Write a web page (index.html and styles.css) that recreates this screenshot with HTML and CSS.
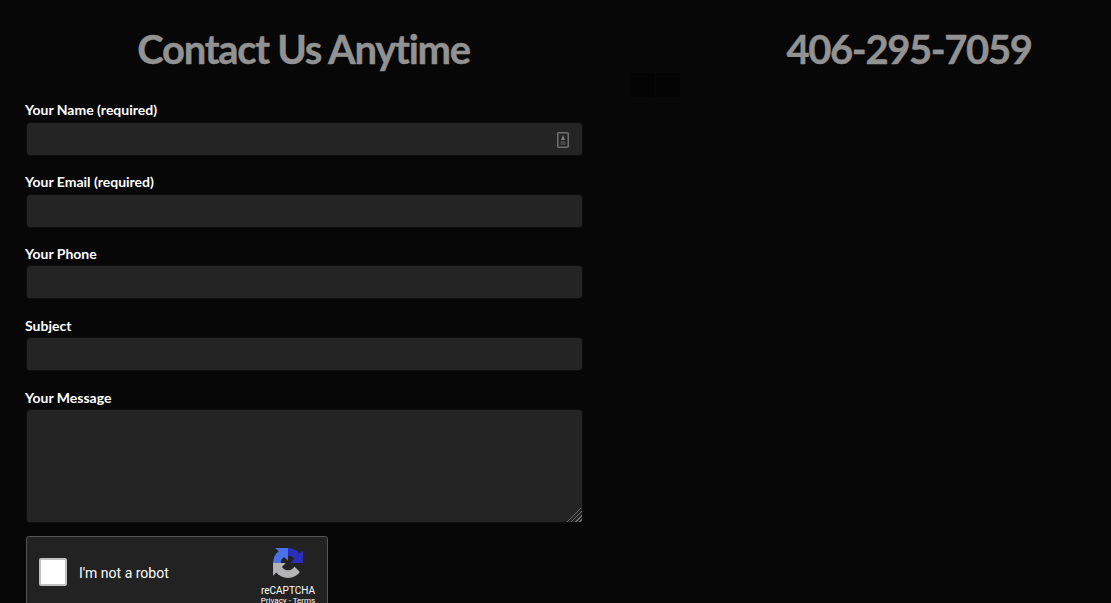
FILE: index.html
```html
<!DOCTYPE html>
<html lang="en">
<head>
    <meta charset="UTF-8">
    <meta name="viewport" content="width=device-width, initial-scale=1.0">
    <title>Contact Us Anytime</title>
    <link rel="stylesheet" href="styles.css">
</head>
<body>
    <div class="page">
        <section class="contact-col">
            <h2 class="big-title">Contact Us Anytime</h2>
            <form class="contact-form">
                <div class="field">
                    <label for="yourName">Your Name (required)</label>
                    <div class="input-wrap">
                        <input type="text" id="yourName">
                        <svg class="autofill-icon" viewBox="0 0 12 16" width="12" height="16" aria-hidden="true">
                            <rect x="0.75" y="0.75" width="10.5" height="14.5" rx="1" fill="none" stroke="#707070" stroke-width="1.5"/>
                            <path d="M6 3 L8 8 H4 Z" fill="#808080"/>
                            <rect x="3.5" y="9.5" width="5" height="1" fill="#666"/>
                            <rect x="3.5" y="11.5" width="5" height="1" fill="#666"/>
                        </svg>
                    </div>
                </div>
                <div class="field">
                    <label for="yourEmail">Your Email (required)</label>
                    <input type="email" id="yourEmail">
                </div>
                <div class="field">
                    <label for="yourPhone">Your Phone</label>
                    <input type="tel" id="yourPhone">
                </div>
                <div class="field">
                    <label for="subject">Subject</label>
                    <input type="text" id="subject">
                </div>
                <div class="field">
                    <label for="yourMessage">Your Message</label>
                    <textarea id="yourMessage"></textarea>
                </div>
                <div class="captcha">
                    <span class="captcha-box"></span>
                    <span class="captcha-text">I'm not a robot</span>
                    <div class="captcha-brand">
                        <svg viewBox="0 0 64 64" width="30" height="30" aria-hidden="true">
                            <path d="M64 31.955l-.033-1.37V4.687l-7.16 7.16C50.948 4.674 42.033.093 32.05.093 21.665.093 12.43 5.05 6.593 12.727l11.736 11.86a15.55 15.55 0 0 1 4.75-5.32c2.05-1.6 4.952-2.91 8.968-2.91.485 0 .86.057 1.133.163 4.978.393 9.293 3.14 11.834 7.127l-8.308 8.31c10.523-.04 22.4-.066 28.294.003" fill="#2b2fb8"/>
                            <path d="M31.95 0l-1.37.033H4.687l7.16 7.16C4.674 13.05.093 21.967.093 31.95c0 10.385 4.958 19.62 12.635 25.458l11.86-11.736a15.55 15.55 0 0 1-5.32-4.75c-1.6-2.05-2.91-4.952-2.91-8.968 0-.485.057-.86.163-1.133.393-4.978 3.14-9.293 7.127-11.834l8.31 8.308c-.04-10.523-.066-22.4.003-28.294" fill="#4a72e6"/>
                            <path d="M0 32l.033 1.37v25.9l7.16-7.16c5.86 7.173 14.774 11.754 24.757 11.754 10.385 0 19.62-4.958 25.458-12.635l-11.736-11.86a15.55 15.55 0 0 1-4.75 5.32c-2.05 1.6-4.952 2.91-8.968 2.91-.485 0-.86-.057-1.133-.163-4.978-.393-9.293-3.14-11.834-7.127l8.308-8.31c-10.523.04-22.4.066-28.294-.003" fill="#b4b4b4"/>
                        </svg>
                        <span class="captcha-name">reCAPTCHA</span>
                        <span class="captcha-links">Privacy - Terms</span>
                    </div>
                </div>
            </form>
        </section>
        <section class="phone-col">
            <h2 class="big-title phone-title">406-295-7059</h2>
            <div class="ghost-squares">
                <span></span>
                <span></span>
            </div>
        </section>
    </div>
</body>
</html>
```

FILE: styles.css
```css
html, body {
    height: 100%;
}

body {
    margin: 0;
    background: #070707;
    font-family: 'Lato', sans-serif;
    overflow: hidden;
    color: #fff;
}

.page {
    display: grid;
    grid-template-columns: 610px 1fr;
}

.contact-col {
    padding: 0 28px 0 25px;
}

.big-title {
    margin: 0;
    padding-top: 25px;
    font-size: 40px;
    line-height: 48px;
    font-weight: 700;
    letter-spacing: -1.3px;
    color: #929292;
    text-align: center;
    -webkit-text-stroke: 0.4px #929292;
}

.contact-form {
    margin-top: 27.4px;
}

.field + .field {
    margin-top: 16.4px;
}

.field label {
    display: block;
    font-size: 14px;
    line-height: 20px;
    font-weight: 700;
    margin-bottom: 1.4px;
}

.field input,
.field textarea {
    display: block;
    box-sizing: border-box;
    width: 557px;
    height: 34px;
    margin-left: 1px;
    background: #242424;
    border: 1px solid #0e0e0e;
    border-radius: 4px;
    color: #fff;
    outline: none;
}

.field textarea {
    height: 114px;
    resize: vertical;
}

.field textarea::-webkit-resizer {
    background:
        linear-gradient(135deg, #242424 50%, transparent 50%),
        repeating-linear-gradient(135deg, #242424 0 1px, #6a6a6a 1px 2px, #242424 2px 3px);
}

.input-wrap {
    position: relative;
}

.autofill-icon {
    position: absolute;
    top: 10px;
    right: 13px;
}

.captcha {
    display: flex;
    align-items: flex-start;
    box-sizing: border-box;
    width: 302px;
    height: 76px;
    margin: 13px 0 0 1px;
    background: #222;
    border: 1px solid #555;
    border-radius: 3px;
}

.captcha-box {
    box-sizing: border-box;
    width: 28px;
    height: 28px;
    margin: 21px 0 0 12px;
    background: #fff;
    border: 2px solid #c1c1c1;
    border-radius: 2px;
}

.captcha-text {
    margin: 28px 0 0 12px;
    font-family: 'Roboto', sans-serif;
    font-size: 14px;
    line-height: 17px;
}

.captcha-brand {
    display: flex;
    flex-direction: column;
    align-items: center;
    margin: 11px 0 0 auto;
    width: 70px;
    padding-right: 4px;
    font-family: 'Roboto', sans-serif;
}

.captcha-name {
    margin-top: 6px;
    font-size: 10px;
    line-height: 13px;
}

.captcha-links {
    margin-top: -1px;
    font-size: 8px;
    line-height: 10px;
}

.phone-col {
    padding-left: 20px;
}

.phone-title {
    padding-left: 77px;
    letter-spacing: -1.4px;
}

.ghost-squares {
    display: flex;
    gap: 1px;
}

.ghost-squares span {
    width: 24.5px;
    height: 24px;
    background: #040404;
}
```
